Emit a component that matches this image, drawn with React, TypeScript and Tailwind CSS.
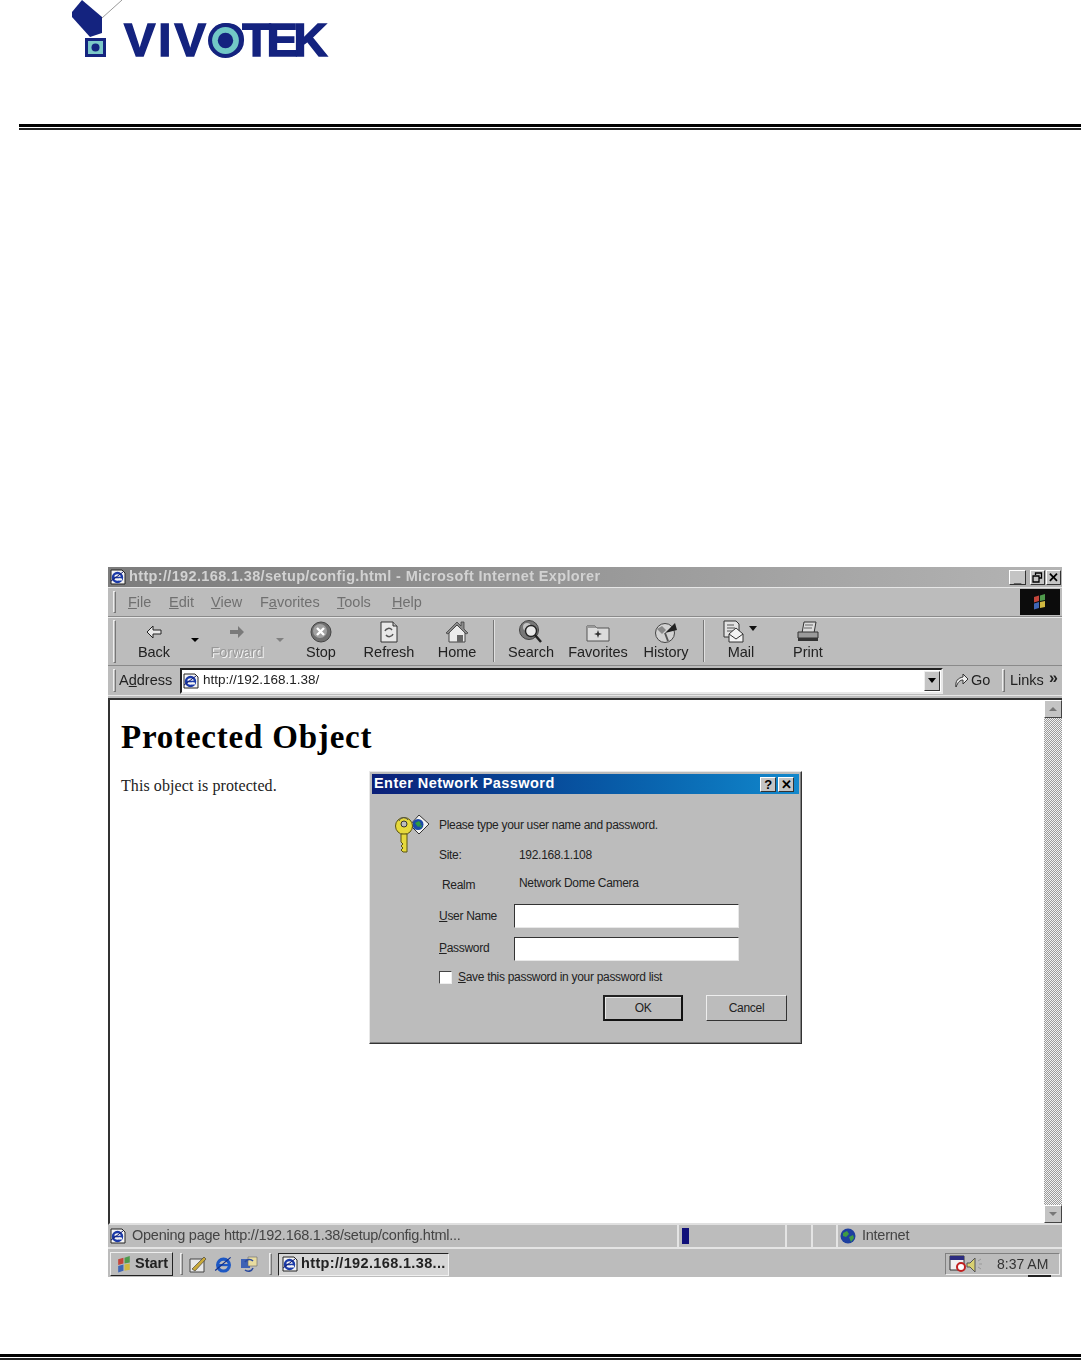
import type { ReactNode } from "react";

const toolbarItems = [
  { label: "Back", width: "w-[72px]", icon: <BackIcon /> },
  { label: "", width: "w-[10px]", arrow: "dark" },
  { label: "Forward", width: "w-[74px]", icon: <ForwardIcon />, disabled: true },
  { label: "", width: "w-[12px]", arrow: "light" },
  { label: "Stop", width: "w-[70px]", icon: <StopIcon /> },
  { label: "Refresh", width: "w-[66px]", icon: <RefreshIcon /> },
  { label: "Home", width: "w-[70px]", icon: <HomeIcon /> },
  { divider: true },
  { label: "Search", width: "w-[70px]", icon: <SearchIcon /> },
  { label: "Favorites", width: "w-[64px]", icon: <FavoritesIcon /> },
  { label: "History", width: "w-[72px]", icon: <HistoryIcon /> },
  { divider: true },
  { label: "Mail", width: "w-[70px]", icon: <MailIcon /> },
  { label: "Print", width: "w-[64px]", icon: <PrintIcon /> },
];

function BackIcon() {
  return (
    <svg width="18" height="16" viewBox="0 0 18 16">
      <path d="M8 2 2 8l6 6v-4h8V6H8z" fill="#e8e8e8" stroke="#222" strokeWidth="1" />
    </svg>
  );
}

function ForwardIcon() {
  return (
    <svg width="18" height="16" viewBox="0 0 18 16">
      <path d="M10 2l6 6-6 6v-4H2V6h8z" fill="#7a7a7a" />
    </svg>
  );
}

function StopIcon() {
  return (
    <svg width="24" height="22" viewBox="0 0 24 22">
      <circle cx="12" cy="11" r="10" fill="#6e6e6e" stroke="#444" />
      <circle cx="11" cy="10" r="7" fill="#a0a0a0" />
      <path d="M8 7l7 7M15 7l-7 7" stroke="#fff" strokeWidth="2.4" />
    </svg>
  );
}

function RefreshIcon() {
  return (
    <svg width="20" height="22" viewBox="0 0 20 22">
      <path d="M2 1h12l4 4v16H2z" fill="#e8e8e8" stroke="#333" />
      <path d="M14 1v4h4" fill="#bbb" stroke="#333" />
      <path d="M6 10a4 4 0 0 1 7-1M14 13a4 4 0 0 1-7 1" fill="none" stroke="#555" strokeWidth="1.5" />
    </svg>
  );
}

function HomeIcon() {
  return (
    <svg width="24" height="23" viewBox="0 0 24 23">
      <path d="M4 12v10h16V12l-8-7z" fill="#ececec" stroke="#444" />
      <path d="M1 13 12 2l4 4V2h3v7l4 4-2 1-9-9-9 9z" fill="#8a8a8a" stroke="#333" strokeWidth=".7" />
      <rect x="12" y="15" width="6" height="7" fill="#666" />
    </svg>
  );
}

function SearchIcon() {
  return (
    <svg width="24" height="23" viewBox="0 0 24 23">
      <circle cx="10" cy="10" r="9.500" fill="#777" stroke="#444" />
      <circle cx="8" cy="7" r="4" fill="#c4c4c4" />
      <circle cx="12" cy="11" r="5.500" fill="#e8e8e8" stroke="#222" strokeWidth="1.400" />
      <path d="M16 15l6 7" stroke="#222" strokeWidth="2.500" />
    </svg>
  );
}

function FavoritesIcon() {
  return (
    <svg width="24" height="20" viewBox="0 0 24 20">
      <path d="M1 4h8l2 2h12v13H1z" fill="#dcdcdc" stroke="#555" />
      <path d="M1 4h8l2 2H1z" fill="#999" />
      <path d="M12 8l1 3 3 1-3 1-1 3-1-3-3-1 3-1z" fill="#333" />
    </svg>
  );
}

function HistoryIcon() {
  return (
    <svg width="24" height="22" viewBox="0 0 24 22">
      <circle cx="11" cy="12" r="9.500" fill="#d2d2d2" stroke="#444" />
      <path d="M3 8l5-3 4 4-4 4z" fill="#888" />
      <path d="M11 12 21 2l2 7z" fill="#222" />
      <path d="M11 12l3 8" stroke="#555" strokeWidth="2" />
    </svg>
  );
}

function MailIcon() {
  return (
    <svg width="36" height="23" viewBox="0 0 36 23">
      <path d="M1 1h12l3 3v13H1z" fill="#e2e2e2" stroke="#333" />
      <path d="M4 5h7M4 8h8M4 11h6" stroke="#555" />
      <path d="M6 14l7-6 7 6v8H6z" fill="#f3f3f3" stroke="#333" />
      <path d="M6 14l7 5 7-5" fill="none" stroke="#333" />
      <path d="M26 6h8l-4 5z" fill="#111" />
    </svg>
  );
}

function PrintIcon() {
  return (
    <svg width="24" height="22" viewBox="0 0 24 22">
      <path d="M8 1h12l-2 11H6z" fill="#dcdcdc" stroke="#333" />
      <path d="M9 4h8M8 7h8" stroke="#666" />
      <path d="M2 11h20v6H2z" fill="#9a9a9a" stroke="#333" />
      <path d="M2 17h20v3H2z" fill="#333" />
    </svg>
  );
}

function IEIcon({ size = 16 }: { size?: number }) {
  return (
    <svg width={size} height={size} viewBox="0 0 16 16" className="shrink-0">
      <path d="M1 1h11l3 3v11H1z" fill="#f5f5f5" stroke="#222" />
      <circle cx="7.500" cy="8.500" r="4.500" fill="none" stroke="#1b3aa8" strokeWidth="2.400" />
      <path d="M3.500 8.500h8" stroke="#1b3aa8" strokeWidth="1.600" />
      <path d="M12 10.500h-3" stroke="#f5f5f5" strokeWidth="2" />
      <path d="M1 12 13 3" stroke="#16206e" strokeWidth="1" />
    </svg>
  );
}

function GlobeIcon() {
  return (
    <svg width="16" height="16" viewBox="0 0 16 16" className="shrink-0">
      <circle cx="8" cy="8" r="7.500" fill="#1d3f9f" />
      <path d="M3 5l4-2 2 3-3 3-3-1zM9 9l4-2 1 3-3 4z" fill="#3f9b43" />
    </svg>
  );
}

function KeyIcon() {
  return (
    <svg width="34" height="38" viewBox="0 0 34 38">
      <path d="M24 0l10 9-10 10-9-9z" fill="#f2f2f2" stroke="#333" />
      <circle cx="23" cy="9.500" r="5.500" fill="#1c4aa8" />
      <path d="M20 8l4-2 2 3-3 3zM24 11l3-1-1 3z" fill="#2f9b3f" />
      <circle cx="9" cy="11" r="8.500" fill="#e6d93c" stroke="#5b5410" />
      <circle cx="9" cy="9" r="3" fill="#bdbdbd" stroke="#333" />
      <path d="M4 6a5 5 0 0 1 9-1" fill="none" stroke="#555" />
      <path d="M6 19h6v18H8l-2-2 2-2-2-2 2-2-2-2z" fill="#e6d93c" stroke="#5b5410" />
    </svg>
  );
}

function WindowsFlag({ size = 18 }: { size?: number }) {
  return (
    <svg width={size} height={size} viewBox="0 0 18 18">
      <path d="M3 4l5-1.500V8l-5 1.500z" fill="#c2453a" />
      <path d="M9 2.500 14 1v6L9 8z" fill="#4f9a4c" />
      <path d="M3 10.500 8 9v6l-5 1.500z" fill="#3f66b5" />
      <path d="M9 9l5-1v6l-5 1z" fill="#d0b840" />
    </svg>
  );
}

function Handle({ className = "" }: { className?: string }) {
  return <div className={`w-[3px] shrink-0 border-l border-t border-[#eeeeee] border-r border-b border-r-[#777777] border-b-[#777777] ${className}`} />;
}

function DoubleRule({ className = "" }: { className?: string }) {
  return (
    <div className={`flex flex-col gap-px ${className}`}>
      <div className="h-[3px] bg-black" />
      <div className="h-[2px] bg-[#222222]" />
    </div>
  );
}

function CaptionButton({ children, className = "" }: { children: ReactNode; className?: string }) {
  return (
    <div className={`flex h-[15px] w-[16px] items-center justify-center border border-t-white border-l-white border-r-[#333333] border-b-[#333333] bg-[#c4c4c4] font-bold text-[13px] leading-none text-black ${className}`}>
      {children}
    </div>
  );
}

function MenuItem({ width, before, mark, after }: { width: string; before?: string; mark: string; after: string }) {
  return (
    <span className={`${width} text-[#707070]`}>
      {before}
      <span className="underline">{mark}</span>
      {after}
    </span>
  );
}

function Toolbar() {
  return (
    <div className="flex h-[49px] items-stretch border-b border-[#8a8a8a] border-t border-t-[#e6e6e6] pl-[5px] pt-[2px] pb-[2px]">
      <Handle className="mr-[2px]" />
      {toolbarItems.map((item, i) => {
        if (item.divider) {
          return <div key={i} className="mx-[1px] mb-[1px] w-[2px] shrink-0 border-l border-[#777777] bg-[#e0e0e0]" />;
        }
        if (item.arrow) {
          return (
            <div key={i} className={`${item.width} flex items-start justify-center pt-[18px]`}>
              <div className={`h-0 w-0 border-x-[4px] border-t-[4px] border-x-transparent ${item.arrow === "dark" ? "border-t-black" : "border-t-[#808080]"}`} />
            </div>
          );
        }
        return (
          <div key={i} className={`${item.width} flex shrink-0 flex-col items-center`}>
            <div className="flex h-[23px] shrink-0 items-center">{item.icon}</div>
            <span className={`text-[14.500px] leading-[18px] ${item.disabled ? "text-[#999999] [text-shadow:1px_1px_0_#f4f4f4]" : "text-[#222222]"}`}>
              {item.label}
            </span>
          </div>
        );
      })}
    </div>
  );
}

function PasswordDialog() {
  return (
    <div className="absolute left-[259px] top-[71px] flex h-[273px] w-[433px] flex-col border border-t-[#e8e8e8] border-l-[#e8e8e8] border-r-[#333333] border-b-[#333333] bg-[#bcbcbc] p-[2px] text-[12px] tracking-[-0.3px] text-[#222222] shadow-[inset_-1px_-1px_0_#808080]">
      <div className="flex h-[20px] items-center justify-between bg-gradient-to-r from-[#0b1f78] to-[#1288cc] pl-[2px] pr-[5px]">
        <span className="text-[14.500px] font-bold tracking-[0.45px] text-white">Enter Network Password</span>
        <div className="flex gap-[2px]">
          <CaptionButton>?</CaptionButton>
          <CaptionButton>✕</CaptionButton>
        </div>
      </div>
      <div className="relative flex flex-col pl-[67px]">
        <div className="absolute left-[23px] top-[21px]">
          <KeyIcon />
        </div>
        <p className="mt-[22px] h-[18px] leading-[18px]">Please type your user name and password.</p>
        <div className="mt-[12px] flex h-[18px] items-center">
          <span className="w-[80px]">Site:</span>
          <span>192.168.1.108</span>
        </div>
        <div className="mt-[10px] flex h-[18px] items-center">
          <span className="w-[80px] pl-[3px] pt-[3px]">Realm</span>
          <span>Network Dome Camera</span>
        </div>
        <div className="mt-[12px] flex h-[24px] items-center">
          <span className="w-[75px]"><span className="underline">U</span>ser Name</span>
          <div className="h-[24px] w-[225px] border border-t-[#333333] border-l-[#333333] border-r-[#e8e8e8] border-b-[#e8e8e8] bg-white" />
        </div>
        <div className="mt-[9px] flex h-[24px] items-center">
          <span className="w-[75px] pb-[3px]"><span className="underline">P</span>assword</span>
          <div className="h-[24px] w-[225px] border border-t-[#333333] border-l-[#333333] border-r-[#e8e8e8] border-b-[#e8e8e8] bg-white" />
        </div>
        <div className="mt-[9px] flex h-[14px] items-center gap-[6px]">
          <div className="h-[13px] w-[13px] border border-t-[#444444] border-l-[#444444] border-r-[#eeeeee] border-b-[#eeeeee] bg-white" />
          <span><span className="underline">S</span>ave this password in your password list</span>
        </div>
        <div className="mt-[11px] flex gap-[23px] pl-[164px]">
          <div className="flex h-[26px] w-[80px] items-center justify-center border-2 border-t-[#222222] border-l-[#222222] border-r-[#111111] border-b-[#111111] shadow-[inset_1px_1px_0_#e8e8e8]">OK</div>
          <div className="flex h-[26px] w-[81px] items-center justify-center border border-t-[#eeeeee] border-l-[#eeeeee] border-r-[#333333] border-b-[#333333]">Cancel</div>
        </div>
      </div>
    </div>
  );
}

function LogoMark() {
  return (
    <svg width="50" height="58" viewBox="0 0 50 58" className="shrink-0">
      <path d="M0 12 10 0l20 17v16l-12 4L0 17z" fill="#14237f" />
      <path d="M30 18 50 0" stroke="#9a9a9a" strokeWidth="1" />
      <rect x="13" y="38" width="21" height="19" fill="#14237f" />
      <rect x="16" y="41" width="15" height="13" fill="#7cc8c8" />
      <circle cx="23.500" cy="47.500" r="4" fill="#14237f" />
    </svg>
  );
}

export default function App() {
  return (
    <div className="flex h-[1360px] flex-col overflow-hidden bg-white font-['Liberation_Sans',Arial,sans-serif]">
      <header className="flex h-[124px] items-start pl-[72px]">
        <div className="blur-[0.5px]">
          <LogoMark />
        </div>
        <div className="relative ml-[2px] mt-[15px] text-[47px] font-bold leading-[50px] text-[#14237f] [-webkit-text-stroke:1.500px_#14237f] blur-[0.5px]">
          <span className="tracking-[3px]">VIV</span>
          <span className="tracking-[-3px]">O</span>
          <span className="tracking-[-4.500px]">TEK</span>
          <svg width="35" height="35" viewBox="0 0 34 34" className="absolute left-[84px] top-[8px]">
            <circle cx="17" cy="17" r="17" fill="#14237f" />
            <circle cx="17" cy="17" r="13" fill="#72c8c6" />
            <circle cx="17" cy="17" r="7.500" fill="#14237f" />
          </svg>
        </div>
      </header>
      <DoubleRule className="ml-[19px]" />

      <main className="ml-[108px] mt-[437px] flex h-[710px] w-[954px] flex-col bg-[#bcbcbc] blur-[0.35px]">
        <div className="flex h-[20px] items-center justify-between bg-gradient-to-r from-[#7c7c7c] to-[#b4b4b4] pl-[2px] pr-[1px]">
          <div className="flex items-center gap-[3px]">
            <IEIcon />
            <span className="text-[14.500px] font-bold tracking-[0.35px] text-[#d2d2d2]">http://192.168.1.38/setup/config.html - Microsoft Internet Explorer</span>
          </div>
          <div className="flex">
            <CaptionButton className="!w-[17px] items-end">_</CaptionButton>
            <CaptionButton className="ml-[4px] !w-[15px]">
              <svg width="11" height="11" viewBox="0 0 11 11">
                <path d="M3.500 3V1h6v5H7.500M1 4h6v6H1z" fill="none" stroke="#000" strokeWidth="1.300" />
              </svg>
            </CaptionButton>
            <CaptionButton className="ml-[1px] !w-[15px]">✕</CaptionButton>
          </div>
        </div>

        <div className="flex h-[30px] items-center border-y border-t-[#e6e6e6] border-b-[#8a8a8a] pl-[5px] pr-[2px] text-[14.500px]">
          <Handle className="h-[22px]" />
          <div className="flex flex-1 pl-[12px] pt-[1px]">
            <MenuItem width="w-[41px]" mark="F" after="ile" />
            <MenuItem width="w-[42px]" mark="E" after="dit" />
            <MenuItem width="w-[49px]" mark="V" after="iew" />
            <MenuItem width="w-[77px]" before="F" mark="a" after="vorites" />
            <MenuItem width="w-[55px]" mark="T" after="ools" />
            <MenuItem width="w-[40px]" mark="H" after="elp" />
          </div>
          <div className="flex h-[26px] w-[40px] items-center justify-center bg-[#0c0c0c]">
            <WindowsFlag />
          </div>
        </div>

        <Toolbar />

        <div className="flex h-[29px] items-center pl-[5px] pr-[2px] text-[14.500px] text-[#222222]">
          <Handle className="h-[23px]" />
          <span className="ml-[3px] w-[61px]">A<span className="underline">d</span>dress</span>
          <div className="flex h-[26px] w-[763px] items-center border-2 border-t-[#222222] border-l-[#222222] border-r-[#e8e8e8] border-b-[#e8e8e8] bg-white pl-[1px] pr-[1px]">
            <IEIcon />
            <span className="ml-[4px] flex-1 text-[13.500px]">http://192.168.1.38/</span>
            <div className="flex h-[20px] w-[16px] items-center justify-center border border-t-[#eeeeee] border-l-[#eeeeee] border-r-[#333333] border-b-[#333333] bg-[#c4c4c4]">
              <div className="h-0 w-0 border-x-[4px] border-t-[5px] border-x-transparent border-t-black" />
            </div>
          </div>
          <div className="ml-[11px] flex w-[48px] items-center gap-[2px]">
            <svg width="15" height="17" viewBox="0 0 15 17">
              <path d="M2 15C1 9 4 6 9 5V2l5 5-5 5V8C6 8 4 10 2 15z" fill="#eee" stroke="#333" />
            </svg>
            <span>Go</span>
          </div>
          <Handle className="h-[23px]" />
          <span className="ml-[5px] w-[39px]">Links</span>
          <span className="pb-[6px] text-[16px] font-bold leading-[12px]">»</span>
        </div>

        <div className="h-[3px] border-t border-[#e6e6e6]" />

        <div className="relative flex h-[527px] border-y-2 border-l-2 border-t-[#333333] border-l-[#333333] border-b-[#e0e0e0] bg-white">
          <div className="flex-1 pl-[11px] font-['Liberation_Serif',serif] text-black">
            <h1 className="mt-[19px] text-[33px] font-bold leading-[36px] tracking-[0.8px]">Protected Object</h1>
            <p className="mt-[21px] text-[16px] leading-[20px] tracking-[0.08px] text-[#222222]">This object is protected.</p>
          </div>
          <div className="flex w-[18px] flex-col bg-[repeating-conic-gradient(#9a9a9a_0_25%,#f2f2f2_0_50%)] bg-[length:2px_2px]">
            <div className="flex h-[18px] items-center justify-center border border-t-white border-l-white border-r-[#444444] border-b-[#444444] bg-[#c4c4c4]">
              <div className="h-0 w-0 border-x-[4px] border-b-[4px] border-x-transparent border-b-[#777777]" />
            </div>
            <div className="flex-1" />
            <div className="flex h-[18px] items-center justify-center border border-t-white border-l-white border-r-[#444444] border-b-[#444444] bg-[#c4c4c4]">
              <div className="h-0 w-0 border-x-[4px] border-t-[4px] border-x-transparent border-t-[#777777]" />
            </div>
          </div>
          <PasswordDialog />
        </div>

        <div className="flex h-[24px] items-center border-b-2 border-[#e4e4e4] text-[14.500px] tracking-[-0.25px] text-[#444444]">
          <div className="flex w-[569px] items-center gap-[6px] pl-[2px]">
            <IEIcon />
            <span>Opening page http://192.168.1.38/setup/config.html...</span>
          </div>
          <div className="flex h-full w-[108px] items-center border-l-2 border-[#e4e4e4] pl-[3px]">
            <div className="h-[16px] w-[7px] bg-[#10107a]" />
          </div>
          <div className="h-full w-[26px] border-l-2 border-[#e4e4e4]" />
          <div className="h-full w-[25px] border-l-2 border-[#e4e4e4]" />
          <div className="flex h-full items-center gap-[6px] border-l-2 border-[#e4e4e4] pl-[2px]">
            <GlobeIcon />
            <span>Internet</span>
          </div>
        </div>

        <div className="flex flex-1 items-center pl-[2px] pr-[2px] pt-[2px]">
          <div className="flex h-[24px] w-[63px] items-center justify-center gap-[1px] border border-t-[#eeeeee] border-l-[#eeeeee] border-r-[#222222] border-b-[#222222] text-[14.500px] font-bold text-[#222222]">
            <WindowsFlag size={19} />
            Start
          </div>
          <Handle className="ml-[7px] h-[22px]" />
          <div className="ml-[6px] flex items-center gap-[7px]">
            <svg width="18" height="18" viewBox="0 0 18 18">
              <path d="M1 4h14v13H1z" fill="#e8e8e8" stroke="#444" />
              <path d="M3 14 15 2l2 2L6 16z" fill="#c9a93a" stroke="#333" strokeWidth=".6" />
            </svg>
            <svg width="19" height="19" viewBox="0 0 16 16">
              <circle cx="8" cy="8.500" r="5" fill="none" stroke="#1d58c4" strokeWidth="2.600" />
              <path d="M3.500 8.500h9" stroke="#1d58c4" strokeWidth="1.800" />
              <path d="M1 13 14 2" stroke="#12308c" />
            </svg>
            <svg width="18" height="18" viewBox="0 0 18 18">
              <path d="M1 4h9v9H1z" fill="#3d62b5" />
              <path d="M8 2h9v9H8z" fill="#e8dca0" stroke="#666" strokeWidth=".6" />
              <path d="M5 15a5 5 0 0 0 8-2M13 6a5 5 0 0 0-8 1" fill="none" stroke="#2b4a9e" strokeWidth="1.600" />
            </svg>
          </div>
          <Handle className="ml-[11px] h-[22px]" />
          <div className="ml-[6px] flex h-[23px] w-[171px] items-center gap-[3px] border border-t-[#222222] border-l-[#222222] border-r-[#f0f0f0] border-b-[#f0f0f0] bg-[#d6d6d6] pl-[3px] text-[14.500px] font-bold tracking-[0.35px] text-[#222222]">
            <IEIcon />
            http://192.168.1.38...
          </div>
          <div className="flex-1" />
          <div className="relative flex h-[22px] w-[115px] items-center border border-t-[#808080] border-l-[#808080] border-r-[#eeeeee] border-b-[#eeeeee] pl-[3px] text-[14px] text-[#333333]">
            <svg width="36" height="18" viewBox="0 0 36 18" className="shrink-0">
              <path d="M1 1h14v14H1z" fill="#f0f0f0" stroke="#333" />
              <path d="M1 1h14v4H1z" fill="#2b2b80" />
              <circle cx="12" cy="12" r="4" fill="#fff" stroke="#c02020" strokeWidth="2" />
              <path d="M18 8h3l5-5v14l-5-5h-3z" fill="#d8d070" stroke="#555" />
              <path d="M29 6l3-2M30 9h3M29 12l3 2" stroke="#999" />
            </svg>
            <span className="ml-[12px]">8:37 AM</span>
            <div className="absolute bottom-[-3px] left-[82px] h-[2px] w-[23px] bg-[#222222]" />
          </div>
        </div>
      </main>

      <DoubleRule className="mt-[77px]" />
    </div>
  );
}
